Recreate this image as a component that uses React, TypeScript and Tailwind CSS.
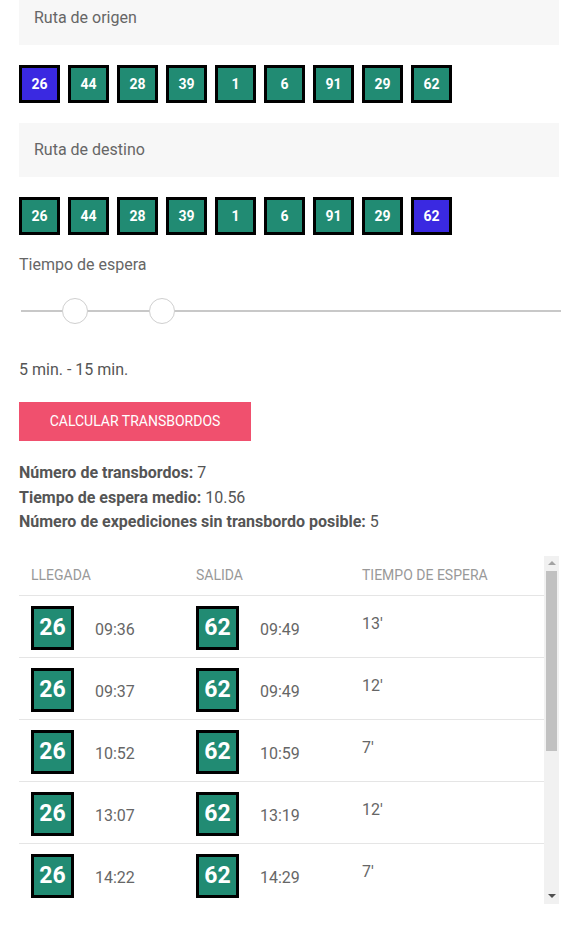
import React from "react";

const routes = [26, 44, 28, 39, 1, 6, 91, 29, 62];

const transfers = [
  { llegada: "09:36", salida: "09:49", espera: "13'" },
  { llegada: "09:37", salida: "09:49", espera: "12'" },
  { llegada: "10:52", salida: "10:59", espera: "7'" },
  { llegada: "13:07", salida: "13:19", espera: "12'" },
  { llegada: "14:22", salida: "14:29", espera: "7'" },
];

const RouteInput = ({ label }: { label: string }) => (
  <div className="h-[54px] bg-[#f7f7f7] flex items-center px-[15px] text-[16px] text-[#666]">{label}</div>
);

const RoutePicker = ({ selected }: { selected: number }) => (
  <div className="flex gap-[8px]">
    {routes.map((r) => (
      <button
        key={r}
        className={`w-[41px] h-[38px] border-[3px] border-black text-white text-[14px] font-bold flex items-center justify-center ${
          r === selected ? "bg-[#3a29e1]" : "bg-[#218b73]"
        }`}
      >
        {r}
      </button>
    ))}
  </div>
);

const Badge = ({ n }: { n: number }) => (
  <div className="w-[43px] h-[44px] border-[3px] border-black bg-[#218b73] text-white text-[23px] font-bold flex items-center justify-center">
    {n}
  </div>
);

// scrollbar drawn by hand, headless chrome does not paint the native one
const Scrollbar = () => (
  <div className="w-[15px] bg-[#f1f1f1] flex flex-col items-center">
    <div className="h-[15px] flex items-center justify-center">
      <div className="w-0 h-0 border-l-[4px] border-r-[4px] border-b-[4px] border-l-transparent border-r-transparent border-b-[#a3a3a3]" />
    </div>
    <div className="w-[11px] h-[180px] bg-[#c1c1c1]" />
    <div className="flex-1" />
    <div className="h-[15px] flex items-center justify-center">
      <div className="w-0 h-0 border-l-[4px] border-r-[4px] border-t-[4px] border-l-transparent border-r-transparent border-t-[#505050]" />
    </div>
  </div>
);

export default function App() {
  return (
    <div className="w-[579px] h-[925px] overflow-hidden bg-white font-['Roboto',sans-serif]">
      <div className="ml-[19px] mr-[20px] flex flex-col -mt-[9px]">
        <RouteInput label="Ruta de origen" />
        <div className="mt-[20px]">
          <RoutePicker selected={26} />
        </div>
        <div className="mt-[20px]">
          <RouteInput label="Ruta de destino" />
        </div>
        <div className="mt-[20px]">
          <RoutePicker selected={62} />
        </div>

        <div className="mt-[18px] text-[16px] leading-[24px] text-[#666]">Tiempo de espera</div>

        <div className="mt-[21px] relative h-[26px] mr-[-2px] ml-[2px]">
          <div className="absolute left-0 right-0 top-[12px] h-[2px] bg-[#c8c8c8]" />
          <div className="absolute left-[41px] top-0 w-[26px] h-[26px] rounded-full bg-white border border-[#cfcfcf]" />
          <div className="absolute left-[128px] top-0 w-[26px] h-[26px] rounded-full bg-white border border-[#cfcfcf]" />
        </div>

        <div className="mt-[34px] text-[16px] leading-[24px] text-[#555]">5 min. - 15 min.</div>

        <button className="mt-[20px] w-[232px] h-[39px] bg-[#f0506e] text-white text-[14px] uppercase flex items-center justify-center">
          Calcular transbordos
        </button>

        <div className="mt-[20px] text-[16px] leading-[24.5px] text-[#555]">
          <div>
            <b>Número de transbordos:</b> 7
          </div>
          <div>
            <b>Tiempo de espera medio:</b> 10.56
          </div>
          <div>
            <b>Número de expediciones sin transbordo posible:</b> 5
          </div>
        </div>

        <div className="mt-[21px] h-[348px] flex overflow-hidden">
          <div className="flex-1">
            <div className="grid grid-cols-[165px_166px_1fr] h-[40px] items-center border-b border-[#e5e5e5] text-[14px] text-[#999] uppercase">
              <div className="pl-[12px]">Llegada</div>
              <div className="pl-[12px]">Salida</div>
              <div className="pl-[12px]">Tiempo de espera</div>
            </div>
            {transfers.map((t, i) => (
              <div
                key={i}
                className="grid grid-cols-[165px_166px_1fr] h-[62px] pt-[4px] items-center border-b border-[#e5e5e5] text-[16px] text-[#666]"
              >
                <div className="pl-[12px] flex items-center gap-[21px]">
                  <Badge n={26} />
                  <span className="pt-[4px]">{t.llegada}</span>
                </div>
                <div className="pl-[12px] flex items-center gap-[21px]">
                  <Badge n={62} />
                  <span className="pt-[4px]">{t.salida}</span>
                </div>
                <div className="pl-[12px] pb-[8px]">{t.espera}</div>
              </div>
            ))}
          </div>
          <Scrollbar />
        </div>
      </div>
    </div>
  );
}
